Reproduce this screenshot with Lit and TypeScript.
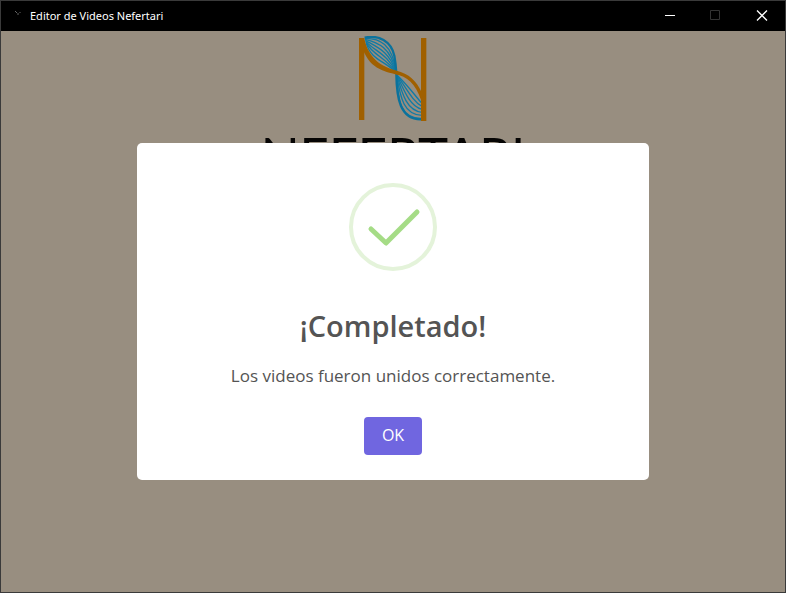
import { LitElement, html, css, svg } from "lit";
import { customElement, state } from "lit/decorators.js";

@customElement("nefertari-logo")
class NefertariLogo extends LitElement {
  static styles = css`
    :host { display: flex; flex-direction: column; align-items: center; }
    .mark { display: block; width: 68px; height: 85px; }
    .word {
      font: 400 51px/60px Lato, "Open Sans", sans-serif;
      color: #060504;
      margin-top: 4px;
    }
  `;
  render() {
    const steps = [0, 1, 2, 3, 4, 5];
    return html`
      <svg class="mark" viewBox="57 24 204 255" role="img" aria-label="Nefertari">
        <g fill="none" stroke="#0f7ba6" stroke-width="4">
          ${steps.map((i) => svg`<path d="M${74 + i} ${31 + i * 3} C${118 - i * 5} ${30 + i * 13} ${158 - i * 5} ${48 + i * 10} 168 133"></path>`)}
          ${steps.map((i) => svg`<path d="M170 140 C${174 + i * 7} ${222 - i * 9} ${184 + i * 9} ${274 - i * 13} ${246} ${271 - i * 9}"></path>`)}
        </g>
        <path d="M74 29 C116 20 153 39 163 83 C167 104 168 119 169 137 C170 207 178 277 246 274" fill="none" stroke="#0b729c" stroke-width="7"></path>
        <path d="M60 30 L73 34 C92 112 148 121 182 132 C217 143 238 172 250 205 L250 238 C234 180 212 152 178 142 C140 130 92 128 68 62 Z" fill="#a06000"></path>
        <path d="M57 30h16v246h-16zM243 30h16v249h-16z" fill="#a06000"></path>
      </svg>
      <div class="word">NEFERTARI</div>
    `;
  }
}

@customElement("app-root")
class AppRoot extends LitElement {
  @state() private open = true;

  static styles = css`
    :host {
      display: flex;
      flex-direction: column;
      box-sizing: border-box;
      min-height: 100vh;
      border: 1px solid #3a3a3a;
      background: #988e80;
      font-family: "Open Sans", "Noto Sans", sans-serif;
    }
    .titlebar {
      display: flex;
      align-items: center;
      height: 30px;
      background: #000;
      color: #fff;
    }
    .app-icon { width: 16px; height: 16px; margin: 0 5px 0 8px; }
    .caption { flex: 1; font: 400 11px/16px "Noto Sans", sans-serif; }
    .win {
      display: grid;
      place-items: center;
      width: 46px;
      height: 30px;
      padding: 0;
      border: 0;
      background: none;
      color: #fff;
    }
    .win svg { display: block; width: 12px; height: 12px; }
    .win:disabled { color: #333; }
    .content { position: relative; flex: 1; padding-top: 5px; }
    .backdrop {
      position: absolute;
      inset: 0;
      display: flex;
      align-items: center;
      justify-content: center;
      padding: 10px;
    }
    .dialog {
      display: flex;
      flex-direction: column;
      align-items: center;
      box-sizing: border-box;
      width: 100%;
      max-width: 512px;
      padding: 40px 20px 25px;
      border-radius: 5px;
      background: #fff;
      color: #545454;
      text-align: center;
    }
    .check { display: block; width: 88px; height: 88px; }
    h2 { margin: 33px 0 0; font-size: 29px; line-height: 44px; font-weight: 600; }
    p { margin: 16px 0 29px; font-size: 17px; line-height: 24px; }
    .ok {
      height: 38px;
      padding: 0 18px 2px;
      border: 0;
      border-radius: 4px;
      background: #7066e0;
      color: #fff;
      font: 500 16px/24px "Open Sans", "Noto Sans", sans-serif;
    }
  `;

  render() {
    return html`
      <header class="titlebar">
        <svg class="app-icon" viewBox="0 0 16 16" aria-hidden="true">
          <path d="M6 3l2 2M9 5v2M11 4v1" stroke="#666" fill="none"></path>
        </svg>
        <span class="caption">Editor de Videos Nefertari</span>
        <button class="win" aria-label="Minimizar">
          <svg viewBox="0 0 12 12"><path d="M1 5.5h10" stroke="currentColor"></path></svg>
        </button>
        <button class="win" aria-label="Maximizar" disabled>
          <svg viewBox="0 0 12 12"><path d="M.5.5h9v9h-9z" fill="none" stroke="currentColor"></path></svg>
        </button>
        <button class="win" aria-label="Cerrar">
          <svg viewBox="0 0 12 12"><path d="M1 .5l10 10M11 .5l-10 10" stroke="currentColor" stroke-width="1.3"></path></svg>
        </button>
      </header>
      <main class="content">
        <nefertari-logo></nefertari-logo>
        ${this.open
          ? html`<div class="backdrop">
              <section class="dialog" role="dialog" aria-modal="true" aria-labelledby="title" aria-describedby="message">
                <svg class="check" viewBox="0 0 88 88" aria-hidden="true">
                  <circle cx="44" cy="44" r="42" fill="none" stroke="#e4f3da" stroke-width="4"></circle>
                  <path d="M22 46L37 60L68 29" fill="none" stroke="#a5dc86" stroke-width="5" stroke-linecap="round" stroke-linejoin="round"></path>
                </svg>
                <h2 id="title">¡Completado!</h2>
                <p id="message">Los videos fueron unidos correctamente.</p>
                <button class="ok" @click=${() => (this.open = false)}>OK</button>
              </section>
            </div>`
          : null}
      </main>
    `;
  }
}
